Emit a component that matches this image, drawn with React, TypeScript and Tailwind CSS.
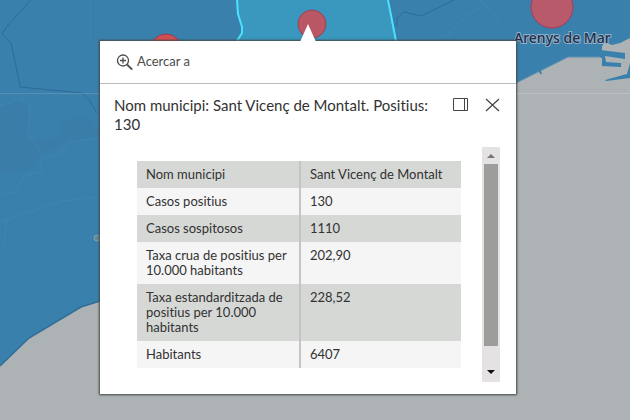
const rows = [
  ["Nom municipi", "Sant Vicenç de Montalt"],
  ["Casos positius", "130"],
  ["Casos sospitosos", "1110"],
  ["Taxa crua de positius per 10.000 habitants", "202,90"],
  ["Taxa estandarditzada de positius per 10.000 habitants", "228,52"],
  ["Habitants", "6407"],
];

function MapCanvas() {
  return (
    <svg
      className="absolute inset-0 h-full w-full"
      viewBox="0 0 630 420"
      preserveAspectRatio="xMidYMid slice"
      aria-label="Mapa de municipis"
    >
      <rect width="630" height="420" fill="#3a80ad" />
      {/* relief */}
      <path d="M0 108 18 99 28 110 30 140 60 138 62 120 90 118 100 135 70 142 40 155 26 172 0 172Z" fill="#397da8" />
      <g fill="none" stroke="#4a8cb5" strokeWidth="1.5" opacity=".35">
        <path d="M0 194 15 192 25 176 40 172 42 158 60 154 68 142 100 138" />
        <path d="M0 222 20 215 42 208 62 201 95 197" />
        <path d="M7 220 3 250M30 102 28 136 40 151M445 38 462 20 486 2M480 0 500 22" />
        <path d="M0 106 25 98M90 0V41" />
      </g>
      {/* municipal limits */}
      <g fill="none" stroke="#2c6c99" strokeWidth="1">
        <path d="M31 0 8 25 2 34 11 43 20 85V87L82 93 90 101 97 113" />
        <path d="M397 27V18L404 12 421 16 454 0" />
      </g>
      {/* sea */}
      <path d="M0 366 29 338 81 307 100 301H516V83L568 57H602V47L604 42 612 45 620 43 630 38V420H0Z" fill="#adb2b5" />
      <path d="M0 366 29 338 81 307 100 301" fill="none" stroke="#316d96" strokeWidth="1.5" />
      <path d="M516 83 568 57H601" fill="none" stroke="#5d91b3" />
      <path d="M600 50 625 53V59L605 56 606 62 621 63V67L602 66V58L600 57ZM605 80 627 74 630 63V78L606 81Z" fill="#3980ad" />
      <path d="M539 69 541 74" stroke="#3980ad" strokeWidth="2" />
      {/* selected municipality */}
      <path d="M237 0 238 14 242 27 242 33 237 41H396L388 0Z" fill="#3a98be" />
      <g fill="none" stroke="#4ce0ff" strokeWidth="2">
        <path d="M237 0 238 14 242 27 242 33 237 41" />
        <path d="M388 0 396 41" />
      </g>
      <path d="M0 93.5H100" stroke="#6597b8" opacity=".7" />
      <path d="M516 93.5H630" stroke="#bbc0c3" />
      <circle cx="97" cy="238" r="3" fill="#638b91" stroke="#7ba3a8" />
      <circle cx="166" cy="50" r="16" fill="#d34e52" stroke="#8f4058" />
      <circle cx="312" cy="24" r="14" fill="#ba5764" stroke="#9c3f57" />
      <circle cx="552" cy="7" r="21" fill="#b95a6b" stroke="#a83a5b" />
      <text
        x="514"
        y="43"
        className="fill-[#232c45] font-['Noto_Sans',sans-serif] text-[14px] font-medium"
        stroke="#8fb0ca"
        strokeWidth="2"
        paintOrder="stroke"
      >
        Arenys de Mar
      </text>
    </svg>
  );
}

export default function App() {
  return (
    <main className="relative min-h-screen overflow-hidden bg-[#adb2b5] pt-[41px] pr-[114px] pb-6 pl-[100px] font-[Lato,sans-serif] text-[#323232] [font-variant-ligatures:none]">
      <MapCanvas />
      <section
        aria-label="Informació del municipi"
        className="relative bg-white pb-3 shadow-[0_0_2px_1px_#444]"
      >
        <svg className="absolute -top-[17px] left-[200px]" width="16" height="18" viewBox="0 0 16 18" aria-hidden="true">
          <path d="M8 0 16 18H0Z" fill="#fff" />
        </svg>
        <header className="flex h-[43px] items-center border-b border-[#bababa] px-4">
          <button type="button" className="flex items-center gap-1 text-[13px] text-[#4c4c4c]">
            <svg width="17" height="17" viewBox="0 0 17 17" fill="none" stroke="currentColor" aria-hidden="true">
              <circle cx="7" cy="6.5" r="5.5" strokeWidth="1.3" />
              <path d="M4 6.5h6M7 3.5v6" strokeWidth="1.3" />
              <path d="m11 10.5 5.2 5.2" strokeWidth="1.8" />
            </svg>
            Acercar a
          </button>
        </header>
        <div className="flex items-start justify-between pt-3 pr-4 pl-[14px]">
          <h1 className="w-[325px] text-[15px] leading-[19px]">
            Nom municipi: Sant Vicenç de Montalt. Positius: 130
          </h1>
          <div className="flex gap-4 pt-[2px]">
            <button type="button" aria-label="Acoblar">
              <svg width="16" height="14" viewBox="0 0 16 14" fill="none" stroke="#444" aria-hidden="true">
                <path d="M.5.5h14v12H.5ZM11.5.5v12" />
              </svg>
            </button>
            <button type="button" aria-label="Tancar">
              <svg width="15" height="14" viewBox="0 0 15 14" stroke="#444" strokeWidth="1.2" aria-hidden="true">
                <path d="m1 1 13 12M14 1 1 13" />
              </svg>
            </button>
          </div>
        </div>
        <div className="flex justify-between pt-[13px] pr-4 pl-[37px]">
          <div className="w-[324px] py-[14px]">
            <table className="w-full table-fixed border-collapse text-left text-[13px] leading-[15px]">
              <tbody>
                {rows.map(([label, value]) => (
                  <tr key={label} className="align-top odd:bg-[#d6d8d6] even:bg-[#f5f5f5]">
                    <th scope="row" className="w-[163px] border-r-2 border-[#c4c5c4] py-[6px] pr-2 pl-[9px] font-normal">
                      {label}
                    </th>
                    <td className="py-[6px] pl-[9px]">{value}</td>
                  </tr>
                ))}
              </tbody>
            </table>
          </div>
          <div className="flex w-[18px] flex-col bg-[#e4e2e3]" aria-hidden="true">
            <svg width="18" height="17" viewBox="0 0 18 17">
              <path d="M5 11h8L9 7Z" fill="#777" />
            </svg>
            <div className="mx-[2px] grow bg-[#9d9d9b]" />
            <svg width="18" height="36" viewBox="0 0 18 36">
              <path d="M5 24h8l-4 4Z" fill="#111" />
            </svg>
          </div>
        </div>
      </section>
    </main>
  );
}
